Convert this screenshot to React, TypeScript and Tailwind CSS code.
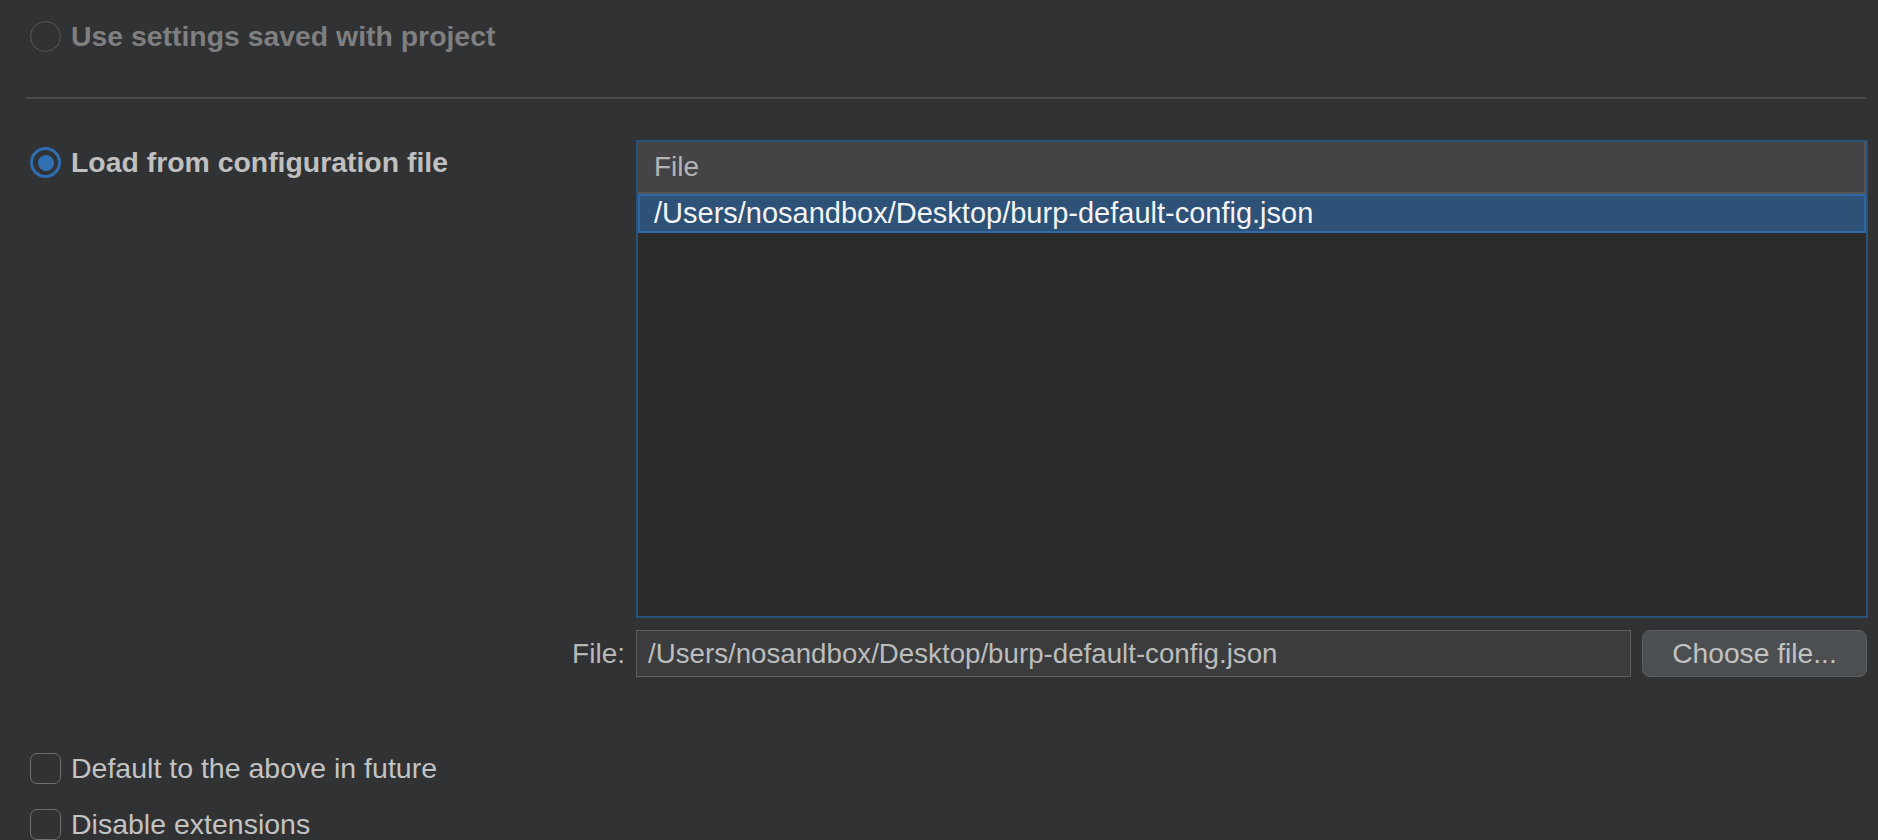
import React from "react";

function Radio({ checked, disabled }: { checked?: boolean; disabled?: boolean }) {
  if (checked) {
    return (
      <div className="w-[31px] h-[31px] rounded-full border-[3px] border-[#2e6db0] flex items-center justify-center shrink-0">
        <div className="w-[16px] h-[16px] rounded-full bg-[#2f6fb2]" />
      </div>
    );
  }
  return (
    <div
      className={
        "w-[31px] h-[31px] rounded-full border-[1.5px] shrink-0 " +
        (disabled ? "border-[#56575a]" : "border-[#6b6b6b]")
      }
    />
  );
}

function Checkbox() {
  return <div className="w-[31px] h-[31px] rounded-[7px] border-[1.5px] border-[#6e6e6e] shrink-0" />;
}

export default function App() {
  return (
    <div className="w-[1878px] h-[840px] overflow-hidden bg-[#313234] font-['Liberation_Sans',Arial,sans-serif] text-[28px] leading-none">
      {/* Use settings saved with project */}
      <div className="pl-[30px] pt-[21px] flex items-center gap-[10px] h-[52px]">
        <Radio disabled />
        <span className="font-bold text-[28.4px] text-[#7f7f80]">Use settings saved with project</span>
      </div>

      {/* separator */}
      <div className="ml-[26px] mt-[45px] w-[1840px] h-[2px] bg-[#4a4b4d]" />

      {/* Load from config section */}
      <div className="mt-[41px] grid grid-cols-[606px_1232px] pl-[30px]">
        <div className="flex items-center gap-[10px] h-[31px] mt-[7px]">
          <Radio checked />
          <span className="font-bold text-[28.4px] text-[#c0c0c0]">Load from configuration file</span>
        </div>
        <div className="h-[478px] border-2 border-[#2c5178] bg-[#2b2b2b] flex flex-col">
          <div className="h-[52px] bg-[#444446] border-b-2 border-r-2 border-[#555557] flex items-center pl-[16px] text-[#b4b4b4]">
            File
          </div>
          <div className="h-[39px] bg-[#2d5177] border-2 border-[#2f68a2] flex items-center pl-[14px] text-[#f4f4f4] text-[29px]">
            /Users/nosandbox/Desktop/burp-default-config.json
          </div>
        </div>

        <div className="mt-[12px] h-[47px] flex items-center justify-end pr-[11px] text-[#b8b8b8]">File:</div>
        <div className="mt-[12px] flex gap-[11px]">
          <div className="w-[995px] h-[47px] bg-[#3b3c3e] border-[1.5px] border-[#5f6062] flex items-center pl-[11px] text-[27.7px] text-[#bcbcbc]">
            /Users/nosandbox/Desktop/burp-default-config.json
          </div>
          <div className="w-[225px] h-[47px] bg-[#4c4f52] border-[1.5px] border-[#5c5f62] rounded-[8px] flex items-center justify-center text-[28.2px] text-[#c2c2c2]">
            Choose file...
          </div>
        </div>
      </div>

      {/* checkboxes */}
      <div className="pl-[30px] mt-[76px] flex flex-col gap-[25px] text-[28.5px]">
        <div className="flex items-center gap-[10px]">
          <Checkbox />
          <span className="text-[#c3c3c3]">Default to the above in future</span>
        </div>
        <div className="flex items-center gap-[10px]">
          <Checkbox />
          <span className="text-[#c3c3c3]">Disable extensions</span>
        </div>
      </div>
    </div>
  );
}
